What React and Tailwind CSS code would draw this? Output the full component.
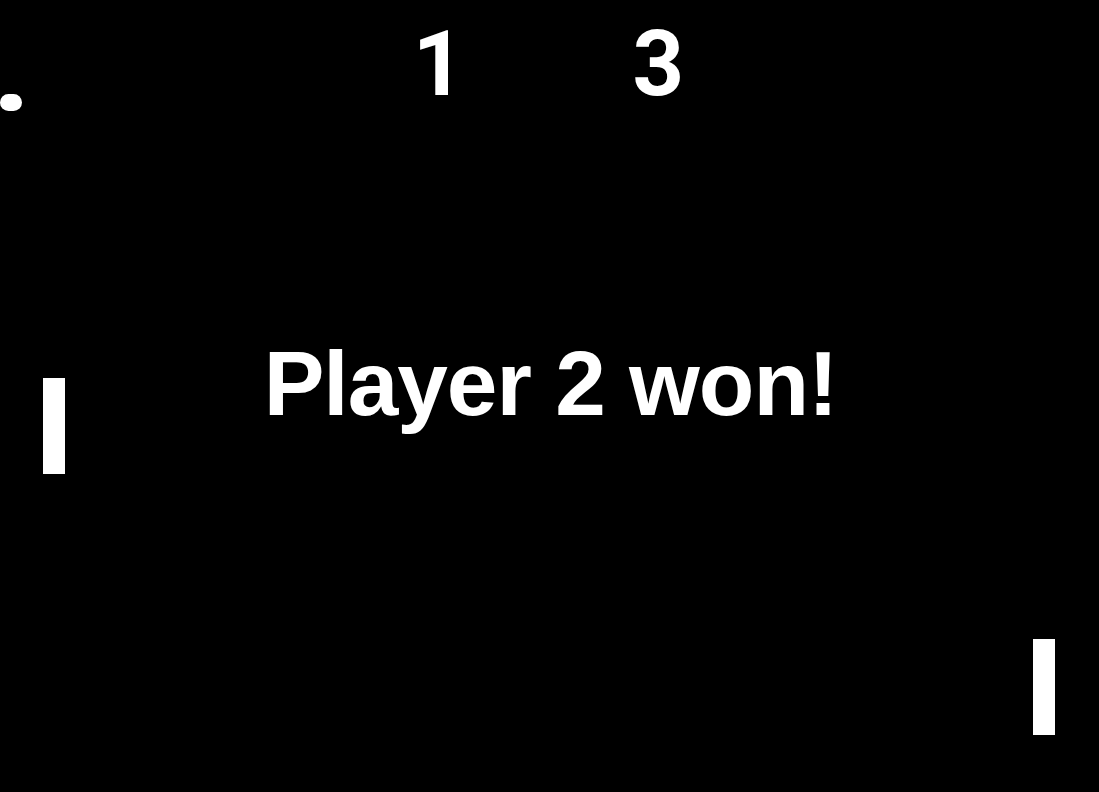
import React from "react";

// game objects sit on a free canvas, so they keep their coordinates
const paddles = [
  { id: "left", pos: "left-[43px] top-[378px]" },
  { id: "right", pos: "left-[1033px] top-[639px]" },
];

export default function App() {
  const score = [1, 3];

  return (
    <div className="relative w-[1099px] h-[792px] bg-black overflow-hidden text-white font-bold">
      <div className="flex flex-col">
        <div className="flex justify-center gap-[168px] pt-[20px] pr-[2px] text-[90px] leading-none font-['Roboto','Liberation_Sans',Arial,sans-serif]">
          <span>{score[0]}</span>
          <span>{score[1]}</span>
        </div>
        <div className="flex justify-center mt-[228px] pl-[2px] font-['Liberation_Sans',Arial,sans-serif]">
          <span className="text-[91px] leading-none tracking-[-1px] whitespace-nowrap">Player 2 won!</span>
        </div>
      </div>

      <div className="absolute left-0 top-[94px] w-[22px] h-[17px] rounded-full bg-white" />
      {paddles.map((p) => (
        <div key={p.id} className={`absolute w-[22px] h-[96px] bg-white ${p.pos}`} />
      ))}
    </div>
  );
}
